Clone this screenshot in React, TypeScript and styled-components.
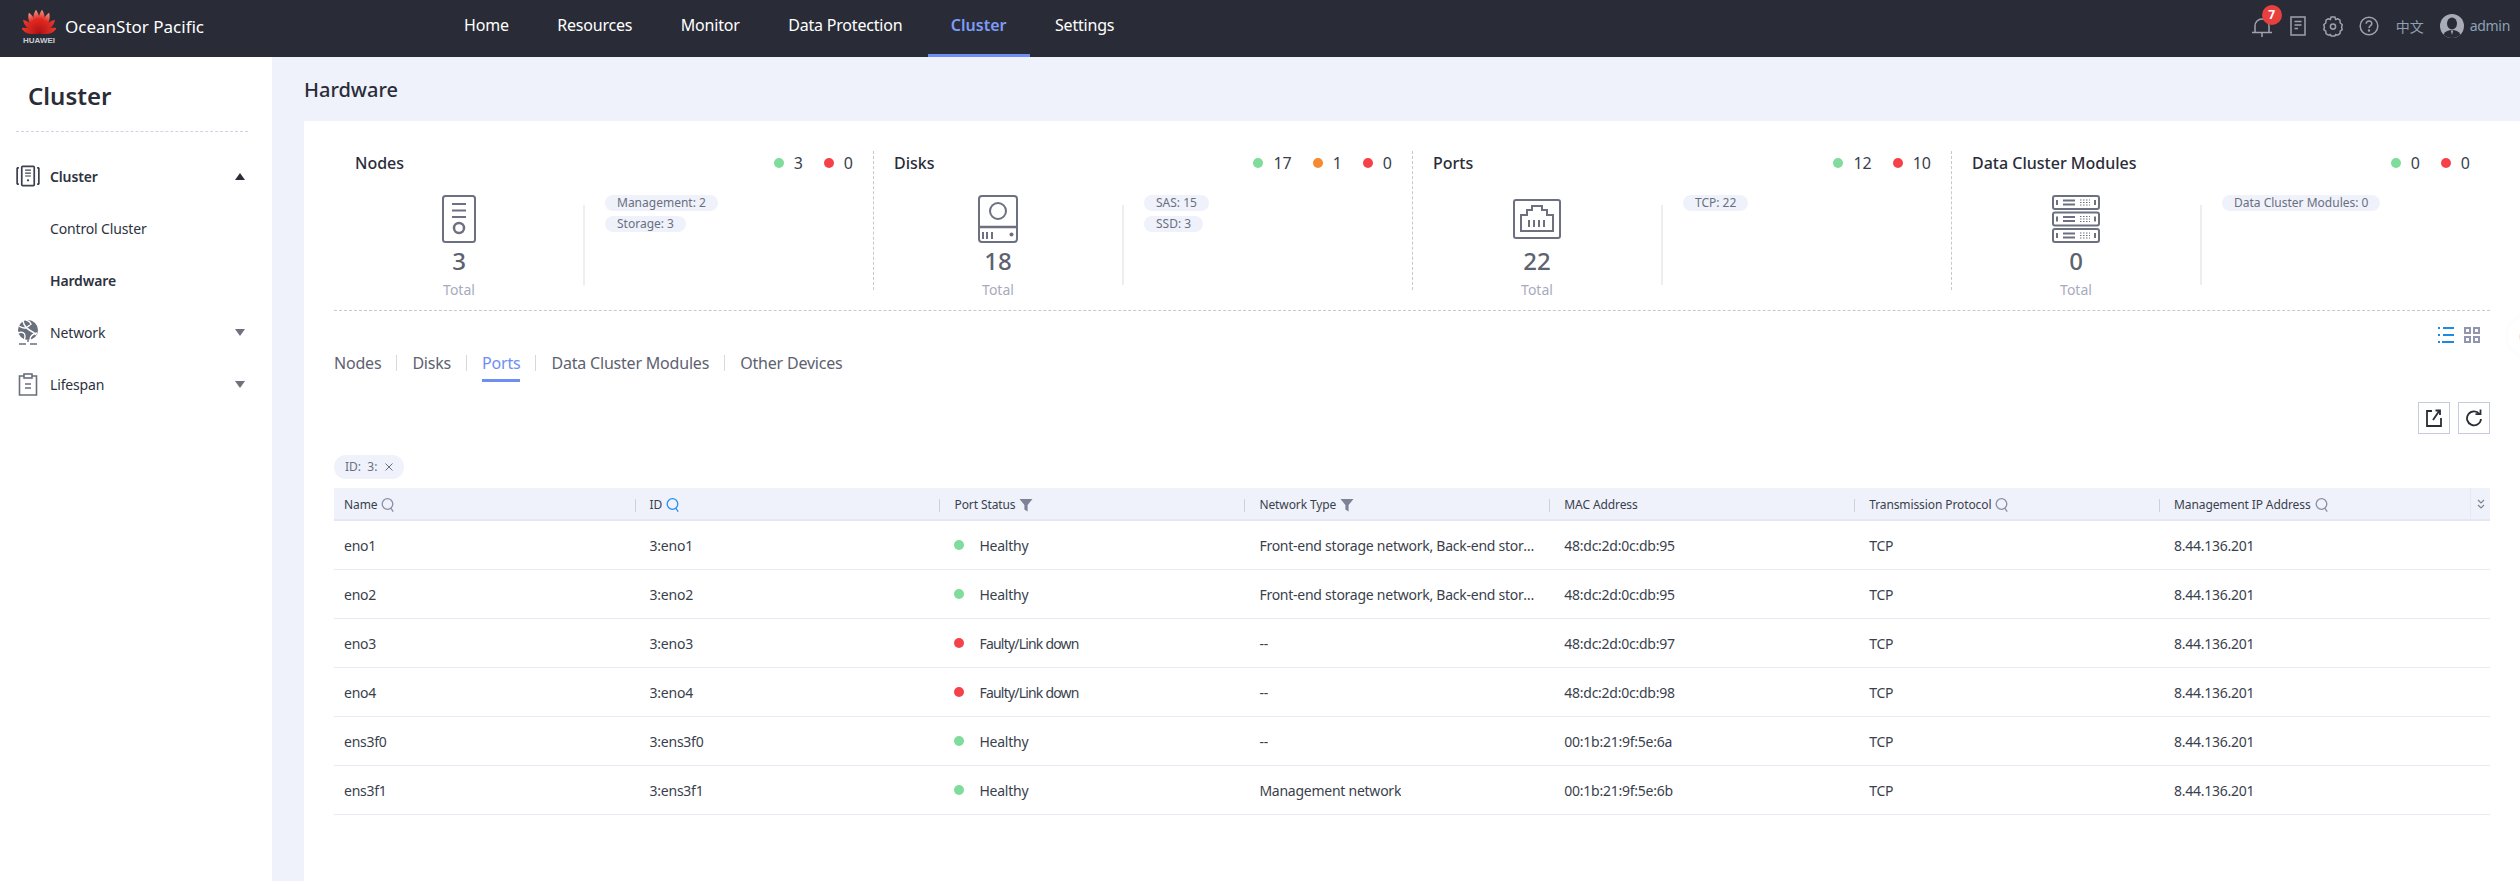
import React from "react";
import styled, { createGlobalStyle } from "styled-components";

const Global = createGlobalStyle`
  html, body { margin: 0; padding: 0; background: #eff2fb; }
  body { font-family: "Noto Sans", "Noto Sans CJK SC", sans-serif; color: #2a2d38; }
  * { box-sizing: border-box; }
`;

const Page = styled.div`
  width: 2520px;
  height: 881px;
  display: flex;
  flex-direction: column;
  overflow: hidden;
  position: relative;
`;

const Header = styled.header`
  height: 57px;
  flex: none;
  background: #292c37;
  display: flex;
  align-items: flex-start;
  padding: 0 0 0 22px;
`;

const Brand = styled.div`
  width: 419px;
  flex: none;
  padding-top: 8px;
  display: flex;
  align-items: flex-start;
  gap: 9px;
  color: #fff;
  font-size: 17px;
`;

const BrandName = styled.span`
  line-height: 24px;
  margin-top: 7px;
`;

const LogoBox = styled.div`
  width: 34px;
  display: flex;
  flex-direction: column;
  align-items: center;
  gap: 3px;
  color: #c9ccd4;
  font-size: 8px;
  line-height: 8px;
  font-weight: 700;
  font-family: "Liberation Sans", sans-serif;
`;

const Nav = styled.nav`
  height: 57px;
  display: flex;
`;

const NavItem = styled.div<{ $active?: boolean }>`
  height: 57px;
  padding: 0 23px;
  margin-right: 2.5px;
  line-height: 51px;
  font-size: 16px;
  letter-spacing: ${(p) => (p.$active ? "0" : "-0.2px")};
  color: ${(p) => (p.$active ? "#7e9cf7" : "#fff")};
  font-weight: ${(p) => (p.$active ? 600 : 400)};
  border-bottom: 3px solid ${(p) => (p.$active ? "#6c8ef5" : "transparent")};
`;

const HeaderRight = styled.div`
  margin-left: auto;
  display: flex;
  align-items: center;
  height: 52px;
  padding-right: 10px;
  color: #9ea2b0;
`;

const IconSlot = styled.div<{ $w: number; $ml?: number }>`
  width: ${(p) => p.$w}px;
  margin-left: ${(p) => p.$ml ?? 0}px;
  display: flex;
  justify-content: center;
  position: relative;
`;

const Badge = styled.span`
  position: absolute;
  top: -10px;
  left: 11px;
  width: 20px;
  height: 20px;
  border-radius: 50%;
  background: #e8403f;
  color: #fff;
  font-size: 12px;
  font-weight: 700;
  line-height: 20px;
  text-align: center;
`;

const Lang = styled.span`
  font-size: 14px;
  color: #8fa0b5;
  margin-left: 17px;
  margin-top: -1px;
`;

const UserName = styled.span`
  font-size: 14px;
  letter-spacing: -0.3px;
  color: #8fa0b5;
  margin-left: 6px;
  margin-top: -1px;
`;

const Body = styled.div`
  flex: 1;
  display: flex;
  min-height: 0;
`;

const Side = styled.aside`
  width: 272px;
  flex: none;
  background: #fff;
  padding: 0 24px 0 16px;
`;

const SideTitle = styled.div`
  height: 75px;
  border-bottom: 1px dashed #cdd2e6;
  padding: 17px 0 0 12px;
  font-size: 24px;
  line-height: 44px;
  font-weight: 600;
  color: #2a2d38;
`;

const Menu = styled.div`
  padding-top: 18px;
`;

const MenuRow = styled.div<{ $strong?: boolean }>`
  height: 52px;
  display: flex;
  align-items: center;
  font-size: 14px;
  letter-spacing: -0.15px;
  font-weight: ${(p) => (p.$strong ? 600 : 400)};
  color: #2d3240;
  position: relative;
`;

const MenuIcon = styled.div`
  width: 34px;
  flex: none;
  display: flex;
  justify-content: center;
  padding-right: 10px;
`;

const SubLabel = styled.span`
  margin-left: 34px;
`;

const Caret = styled.span<{ $up?: boolean }>`
  margin-left: auto;
  margin-right: 3px;
  width: 0;
  height: 0;
  border-left: 5px solid transparent;
  border-right: 5px solid transparent;
  ${(p) =>
    p.$up
      ? "border-bottom: 7px solid #2a2d38;"
      : "border-top: 7px solid #6d7180;"}
`;

const Main = styled.main`
  flex: 1;
  min-width: 0;
  padding: 0 0 0 32px;
  display: flex;
  flex-direction: column;
`;

const PageTitle = styled.div`
  height: 64px;
  font-size: 20px;
  font-weight: 500;
  line-height: 66px;
  color: #2a2d38;
`;

const Card = styled.div`
  flex: 1;
  background: #fff;
  padding: 30px 30px 0;
`;

const Stats = styled.div`
  display: grid;
  grid-template-columns: repeat(4, 539px);
  border-bottom: 1px dashed #c8c8c8;
  padding-bottom: 20px;
  height: 160px;
`;

const Stat = styled.section<{ $first?: boolean }>`
  height: 139px;
  padding: 0 20px 0 20px;
  position: relative;
  border-left: 1px dashed ${(p) => (p.$first ? "transparent" : "#c8c8c8")};
`;

const StatHead = styled.div`
  height: 24px;
  display: flex;
  align-items: center;
  justify-content: space-between;
`;

const StatName = styled.div`
  font-size: 16px;
  font-weight: 500;
  color: #2a2d38;
`;

const Health = styled.div`
  display: flex;
  align-items: center;
  gap: 21px;
  font-size: 16px;
  color: #3a3f4d;
`;

const HealthItem = styled.span`
  display: flex;
  align-items: center;
  gap: 10px;
`;

const Dot = styled.i<{ $c: string }>`
  display: block;
  width: 10px;
  height: 10px;
  border-radius: 50%;
  background: ${(p) => p.$c};
  flex: none;
`;

const StatBody = styled.div`
  display: grid;
  grid-template-columns: 248px 1fr;
  margin-top: 20px;
  margin-left: -20px;
`;

const Total = styled.div`
  width: 248px;
  display: flex;
  flex-direction: column;
  align-items: center;
`;

const TotalIcon = styled.div`
  height: 48px;
  display: flex;
  align-items: center;
  justify-content: center;
  color: #6c7080;
`;

const TotalNum = styled.div`
  font-size: 24px;
  line-height: 36px;
  color: #5d6270;
  font-weight: 500;
`;

const TotalLabel = styled.div`
  font-size: 14px;
  line-height: 20px;
  margin-top: 1px;
  color: #a8abbd;
`;

const TagCol = styled.div`
  padding-left: 22px;
  display: flex;
  flex-direction: column;
  align-items: flex-start;
  gap: 5px;
  position: relative;
  &::before {
    content: "";
    position: absolute;
    left: 0;
    top: 10px;
    width: 2px;
    height: 80px;
    background: #eeeeee;
  }
`;

const Tag = styled.span`
  height: 16px;
  border-radius: 8px;
  background: #eff2fb;
  color: #6a6f7e;
  font-size: 12px;
  line-height: 16px;
  padding: 0 12px;
  white-space: nowrap;
`;

const ViewToggle = styled.div`
  height: 36px;
  display: flex;
  justify-content: flex-end;
  gap: 10px;
  padding: 16px 10px 0 0;
`;

const Tabs = styled.div`
  display: flex;
  align-items: flex-start;
  height: 26px;
  margin-top: 5px;
`;

const Tab = styled.div<{ $active?: boolean }>`
  position: relative;
  font-size: 16px;
  letter-spacing: -0.2px;
  line-height: 22px;
  height: 30px;
  color: ${(p) => (p.$active ? "#6c8ef5" : "#5d6270")};
  &::after {
    content: "";
    position: absolute;
    left: 0;
    right: 0;
    bottom: 0;
    height: 3px;
    background: ${(p) => (p.$active ? "#6c8ef5" : "transparent")};
  }
`;

const TabSep = styled.div`
  width: 1px;
  height: 16px;
  background: #d6d8e0;
  margin: 3px 15px 0;
`;

const Tools = styled.div`
  display: flex;
  justify-content: flex-end;
  gap: 8px;
  margin-top: 24px;
`;

const ToolBtn = styled.div`
  width: 32px;
  height: 32px;
  border: 1px solid #c6cada;
  display: flex;
  align-items: center;
  justify-content: center;
  color: #2a2d38;
`;

const FilterRow = styled.div`
  margin-top: 20px;
  height: 24px;
`;

const FilterTag = styled.span`
  display: inline-flex;
  align-items: center;
  height: 24px;
  padding: 0 11px;
  gap: 8px;
  border-radius: 12px;
  background: #eff2fb;
  font-size: 12px;
  color: #6a6f7e;
  white-space: pre;
`;

const Table = styled.div`
  margin-top: 10px;
`;

const cols = "300.6px repeat(5, 304.9px) 1fr";

const HeadRow = styled.div`
  display: grid;
  grid-template-columns: ${cols};
  height: 33px;
  background: #eff2fb;
  border-bottom: 2px solid #e5e8f3;
  align-items: center;
  position: relative;
`;

const HeadCell = styled.div<{ $first?: boolean }>`
  display: flex;
  align-items: center;
  gap: 4px;
  font-size: 12px;
  letter-spacing: -0.1px;
  color: #3a3f4d;
  height: 22px;
  padding-top: 2px;
  padding-left: ${(p) => (p.$first ? 10 : 15)}px;
  position: relative;
  &::before {
    content: "";
    display: ${(p) => (p.$first ? "none" : "block")};
    position: absolute;
    left: 0;
    top: 6px;
    width: 1px;
    height: 13px;
    background: #ced1dd;
  }
`;

const ExpandCell = styled.div`
  position: absolute;
  right: 0;
  top: 0;
  width: 20px;
  height: 31px;
  border-left: 1px solid #e5e8f3;
  display: flex;
  align-items: center;
  justify-content: center;
  color: #7d8295;
`;

const Row = styled.div`
  display: grid;
  grid-template-columns: ${cols};
  height: 49px;
  border-bottom: 1px solid #e7e9f3;
  align-items: center;
`;

const Cell = styled.div<{ $first?: boolean }>`
  font-size: 14px;
  letter-spacing: -0.25px;
  color: #3a3f4d;
  padding-left: ${(p) => (p.$first ? 10 : 15)}px;
  padding-right: 10px;
  display: flex;
  align-items: center;
  gap: 15px;
  white-space: nowrap;
  overflow: hidden;
`;

const Clip = styled.span`
  overflow: hidden;
  text-overflow: ellipsis;
`;

const StatusText = styled.span<{ $tight?: boolean }>`
  letter-spacing: ${(p) => (p.$tight ? "-0.8px" : "-0.25px")};
`;

const Float = styled.div`
  position: absolute;
  left: 2508px;
  top: 316px;
  width: 40px;
  height: 40px;
  border-radius: 50%;
  background: #fff;
  box-shadow: 0 0 8px rgba(0, 0, 0, 0.03);
  &::after {
    content: "";
    position: absolute;
    left: 11px;
    top: 15px;
    width: 12px;
    height: 12px;
    border-radius: 50%;
    background: #fbe2cd;
  }
`;

const Search = ({ blue }: { blue?: boolean }) => (
  <svg width="14" height="16" viewBox="0 0 14 16" fill="none" stroke={blue ? "#2a8ef0" : "#8a90a5"} strokeWidth="1.3">
    <circle cx="6.5" cy="7" r="5.3" />
    <path d="M9.8 11.2l2.4 3.4" />
  </svg>
);

const Filter = () => (
  <svg width="14" height="14" viewBox="0 0 14 14" fill="#7d8295">
    <path d="M0.5 1h13L8.6 7v6.5L5.4 11.5V7z" />
  </svg>
);

const PETAL = "M0 0C-3.6-6-4.6-13-3-18C-2.2-20.500-1-22.500 0.4-24C1.800-21 2.800-17.500 2.900-13C3-8 1.600-3.500 0 0z";
const petals: [number, number][] = [
  [-8, 1], [8, 1], [-27, 0.96], [27, 0.96], [-50, 0.88], [50, 0.88], [-74, 0.78], [74, 0.78],
];

const Logo = () => (
  <svg width="34" height="26" viewBox="0 0 34 26">
    <defs>
      <linearGradient id="hw" x1="0" y1="0" x2="0" y2="1">
        <stop offset="0" stopColor="#f6a08c" />
        <stop offset="0.4" stopColor="#e2271f" />
        <stop offset="1" stopColor="#b01014" />
      </linearGradient>
      <linearGradient id="hw2" x1="0" y1="0" x2="0" y2="1">
        <stop offset="0" stopColor="#ee3a2c" />
        <stop offset="1" stopColor="#b01014" />
      </linearGradient>
    </defs>
    {petals.map(([a, s]) => (
      <path
        key={a}
        d={PETAL}
        fill={Math.abs(a) < 30 ? "url(#hw)" : "url(#hw2)"}
        transform={`translate(17 25.5) rotate(${a}) scale(${a < 0 ? s : -s} ${s})`}
      />
    ))}
  </svg>
);

const Bell = () => (
  <svg width="22" height="22" viewBox="0 0 22 22" fill="none" stroke="#9ea2b0" strokeWidth="1.5">
    <path d="M1 17.5h20M4 17.5V11a7 7 0 0 1 14 0v6.5M11 18v4" />
  </svg>
);

const Doc = () => (
  <svg width="16" height="20" viewBox="0 0 16 20" fill="none" stroke="#9ea2b0" strokeWidth="1.5">
    <rect x="1" y="1" width="14" height="18" />
    <path d="M4.5 5.500h7M4.500 9h7M4.500 12.500h3.500" />
  </svg>
);

const Gear = () => (
  <svg width="20" height="21" viewBox="0 0 20 21" fill="none" stroke="#9ea2b0" strokeWidth="1.5">
    <path d="M8 1h4l.6 2.600 2-.9 2.400 1.500.2 2.800 2 1.500-.6 2.800.6 2.400-2 1.500-.2 2.400-2.400 1.500-2-.7L12 20H8l-.6-1.600-2 .7L3 17.600l-.2-2.400-2-1.500.6-2.400-.6-2.800 2-1.500.2-2.800 2.400-1.500 2 .9z" strokeLinejoin="round" />
    <circle cx="10" cy="10.500" r="2.600" />
  </svg>
);

const Help = () => (
  <svg width="20" height="20" viewBox="0 0 20 20" fill="none" stroke="#9ea2b0" strokeWidth="1.5">
    <circle cx="10" cy="10" r="8.800" />
    <path d="M7.200 7.800c0-4 6-3.600 5.600 0-.2 1.800-2.800 2-2.800 4.200" />
    <circle cx="10" cy="14.600" r=".5" fill="#9ea2b0" />
  </svg>
);

const Avatar = () => (
  <svg width="24" height="24" viewBox="0 0 24 24">
    <circle cx="12" cy="12" r="12" fill="#a8acb8" />
    <ellipse cx="12" cy="9.500" rx="5" ry="6" fill="#292c37" />
    <path d="M3.500 20.500c2-3.500 5-4.500 8.500-4.500s6.500 1 8.500 4.500c-2.500 2.300-5 3.500-8.500 3.500s-6-1.200-8.500-3.500z" fill="#292c37" />
    <path d="M10.800 16.500h2.400L12 21z" fill="#a8acb8" />
  </svg>
);

const ClusterIcon = () => (
  <svg width="25" height="22" viewBox="0 0 25 22" fill="none" stroke="#3d4150" strokeWidth="1.800">
    <rect x="6" y="1" width="13" height="20" rx="1" />
    <path d="M1.200 2.500v17M23.800 2.500v17M1 2.500h2M1 19.500h2M22 2.500h2M22 19.500h2" />
    <path d="M9.500 5h6M9.500 8h6M9.500 11h6" strokeWidth="1.300" />
    <circle cx="12.500" cy="15.500" r="1.200" fill="#3d4150" stroke="none" />
  </svg>
);

const GlobeIcon = () => (
  <svg width="22" height="25" viewBox="0 0 22 25">
    <circle cx="11" cy="10" r="10" fill="#6a6f7e" />
    <g stroke="#fff" strokeWidth="1.400" fill="none">
      <path d="M2 6c4 3 8 2 11-1M6 1c1 5 4 8 8 10s5 4 5 4M1 13c4-2 7 0 7 3s-1 3-1 3M13 20c0-4 2-6 7-7M9 0c3 1 5 2 5 5" />
    </g>
    <path d="M2 24h7M13 24h7M11 20v2" stroke="#6a6f7e" strokeWidth="1.400" />
  </svg>
);

const ClipIcon = () => (
  <svg width="20" height="23" viewBox="0 0 20 23" fill="none" stroke="#6a6f7e" strokeWidth="1.600">
    <path d="M6 3H1.500v19h17V3H14" />
    <rect x="6" y="1" width="8" height="4" />
    <path d="M7 11h6M7 15h6" />
  </svg>
);

const NodeIcon = () => (
  <svg width="36" height="48" viewBox="0 0 36 48" fill="none" stroke="#6c7080" strokeWidth="2">
    <rect x="2" y="1" width="32" height="46" rx="2.500" />
    <path d="M11 9h14M11 15.500h14M11 22h14" />
    <circle cx="18" cy="33" r="5" strokeWidth="2.500" />
  </svg>
);

const DiskIcon = () => (
  <svg width="40" height="48" viewBox="0 0 40 48" fill="none" stroke="#6c7080" strokeWidth="2">
    <rect x="1" y="1" width="38" height="46" rx="3" />
    <circle cx="20" cy="16" r="8" />
    <path d="M1 32h38" strokeWidth="2.400" />
    <path d="M5 37v7M9 37v7M14 37v7" />
    <circle cx="33.500" cy="39.500" r="2" fill="#6c7080" stroke="none" />
  </svg>
);

const PortIcon = () => (
  <svg width="48" height="40" viewBox="0 0 48 40" fill="none" stroke="#6c7080" strokeWidth="2">
    <rect x="1" y="1" width="46" height="38" rx="2" />
    <path d="M8 32V16h6V11h5V7h10v4h5v5h6v16z" />
    <path d="M16 21v7M21 21v7M26 21v7M31 21v7" />
  </svg>
);

const ServerIcon = () => (
  <svg width="48" height="48" viewBox="0 0 48 48" fill="none" stroke="#6c7080" strokeWidth="2">
    {[0, 16.5, 33].map((y) => (
      <g key={y} transform={`translate(0 ${y})`}>
        <rect x="1" y="1" width="46" height="13" rx="2" />
        <path d="M5 5v5M43 5v5" />
        <path d="M11 5.500h12M11 9.500h12" />
        <path d="M28 5h10M28 7.500h10M28 10h10" strokeWidth="1.200" strokeDasharray="1.500 1.500" />
      </g>
    ))}
  </svg>
);

const ListIcon = () => (
  <svg width="16" height="16" viewBox="0 0 16 16" fill="#1f8be0">
    <path d="M0 0h2v2H0zM5 0h11v2H5zM0 7h2v2H0zM5 7h11v2H5zM0 14h2v2H0zM4 14h12v2H4z" />
  </svg>
);

const GridIcon = () => (
  <svg width="16" height="16" viewBox="0 0 16 16" fill="none" stroke="#9195ad" strokeWidth="2">
    <rect x="1" y="1" width="5" height="5" />
    <rect x="10" y="1" width="5" height="5" />
    <rect x="1" y="10" width="5" height="5" />
    <rect x="10" y="10" width="5" height="5" />
  </svg>
);

const ExportIcon = () => (
  <svg width="16" height="18" viewBox="0 0 16 18" fill="none" stroke="#2a2d38" strokeWidth="1.800">
    <path d="M6 2H1v15h14V9" />
    <path d="M7 11L13.500 1.500M9.500 1.500h4.500v4.500" />
  </svg>
);

const RefreshIcon = () => (
  <svg width="16" height="18" viewBox="0 0 16 18" fill="none" stroke="#2a2d38" strokeWidth="1.800">
    <path d="M13.500 5A7 7 0 1 0 15 10" />
    <path d="M9.500 5.200h5V0.500" />
  </svg>
);

const Chevrons = () => (
  <svg width="8" height="10" viewBox="0 0 8 10" fill="none" stroke="currentColor" strokeWidth="1.200">
    <path d="M1 1l3 3 3-3M1 6l3 3 3-3" />
  </svg>
);

const Cross = () => (
  <svg width="8" height="8" viewBox="0 0 8 8" stroke="#6a6f7e" strokeWidth="1">
    <path d="M0.500 0.500l7 7M7.500 0.500l-7 7" />
  </svg>
);

const GREEN = "#7fdc9a";
const RED = "#f5424a";
const ORANGE = "#f58a2e";

const stats = [
  { name: "Nodes", health: [[GREEN, "3"], [RED, "0"]], icon: <NodeIcon />, total: 3, tags: ["Management: 2", "Storage: 3"] },
  { name: "Disks", health: [[GREEN, "17"], [ORANGE, "1"], [RED, "0"]], icon: <DiskIcon />, total: 18, tags: ["SAS: 15", "SSD: 3"] },
  { name: "Ports", health: [[GREEN, "12"], [RED, "10"]], icon: <PortIcon />, total: 22, tags: ["TCP: 22"] },
  { name: "Data Cluster Modules", health: [[GREEN, "0"], [RED, "0"]], icon: <ServerIcon />, total: 0, tags: ["Data Cluster Modules: 0"] },
];

const rows = [
  ["eno1", "Healthy", "Front-end storage network, Back-end storage network", "48:dc:2d:0c:db:95"],
  ["eno2", "Healthy", "Front-end storage network, Back-end storage network", "48:dc:2d:0c:db:95"],
  ["eno3", "Faulty/Link down", "--", "48:dc:2d:0c:db:97"],
  ["eno4", "Faulty/Link down", "--", "48:dc:2d:0c:db:98"],
  ["ens3f0", "Healthy", "--", "00:1b:21:9f:5e:6a"],
  ["ens3f1", "Healthy", "Management network", "00:1b:21:9f:5e:6b"],
];

const navItems = ["Home", "Resources", "Monitor", "Data Protection", "Cluster", "Settings"];
const tabs = ["Nodes", "Disks", "Ports", "Data Cluster Modules", "Other Devices"];

export default function App() {
  return (
    <Page>
      <Global />
      <Header>
        <Brand>
          <LogoBox>
            <Logo />
            HUAWEI
          </LogoBox>
          <BrandName>OceanStor Pacific</BrandName>
        </Brand>
        <Nav>
          {navItems.map((n) => (
            <NavItem key={n} $active={n === "Cluster"}>
              {n}
            </NavItem>
          ))}
        </Nav>
        <HeaderRight>
          <IconSlot $w={22}>
            <Bell />
            <Badge>7</Badge>
          </IconSlot>
          <IconSlot $w={16} $ml={17}><Doc /></IconSlot>
          <IconSlot $w={20} $ml={17}><Gear /></IconSlot>
          <IconSlot $w={20} $ml={16}><Help /></IconSlot>
          <Lang>中文</Lang>
          <IconSlot $w={24} $ml={16}><Avatar /></IconSlot>
          <UserName>admin</UserName>
        </HeaderRight>
      </Header>
      <Body>
        <Side>
          <SideTitle>Cluster</SideTitle>
          <Menu>
            <MenuRow $strong>
              <MenuIcon><ClusterIcon /></MenuIcon>
              Cluster
              <Caret $up />
            </MenuRow>
            <MenuRow><SubLabel>Control Cluster</SubLabel></MenuRow>
            <MenuRow $strong><SubLabel>Hardware</SubLabel></MenuRow>
            <MenuRow>
              <MenuIcon><GlobeIcon /></MenuIcon>
              Network
              <Caret />
            </MenuRow>
            <MenuRow>
              <MenuIcon><ClipIcon /></MenuIcon>
              Lifespan
              <Caret />
            </MenuRow>
          </Menu>
        </Side>
        <Main>
          <PageTitle>Hardware</PageTitle>
          <Card>
            <Stats>
              {stats.map((s, i) => (
                <Stat key={s.name} $first={i === 0}>
                  <StatHead>
                    <StatName>{s.name}</StatName>
                    <Health>
                      {s.health.map(([c, v], j) => (
                        <HealthItem key={j}>
                          <Dot $c={c} />
                          {v}
                        </HealthItem>
                      ))}
                    </Health>
                  </StatHead>
                  <StatBody>
                    <Total>
                      <TotalIcon>{s.icon}</TotalIcon>
                      <TotalNum>{s.total}</TotalNum>
                      <TotalLabel>Total</TotalLabel>
                    </Total>
                    <TagCol>
                      {s.tags.map((t) => (
                        <Tag key={t}>{t}</Tag>
                      ))}
                    </TagCol>
                  </StatBody>
                </Stat>
              ))}
            </Stats>
            <ViewToggle>
              <ListIcon />
              <GridIcon />
            </ViewToggle>
            <Tabs>
              {tabs.map((t, i) => (
                <React.Fragment key={t}>
                  {i > 0 && <TabSep />}
                  <Tab $active={t === "Ports"}>{t}</Tab>
                </React.Fragment>
              ))}
            </Tabs>
            <Tools>
              <ToolBtn><ExportIcon /></ToolBtn>
              <ToolBtn><RefreshIcon /></ToolBtn>
            </Tools>
            <FilterRow>
              <FilterTag>
                {"ID:  3:"}
                <Cross />
              </FilterTag>
            </FilterRow>
            <Table>
              <HeadRow>
                <HeadCell $first>Name <Search /></HeadCell>
                <HeadCell>ID <Search blue /></HeadCell>
                <HeadCell>Port Status <Filter /></HeadCell>
                <HeadCell>Network Type <Filter /></HeadCell>
                <HeadCell>MAC Address</HeadCell>
                <HeadCell>Transmission Protocol <Search /></HeadCell>
                <HeadCell>Management IP Address <Search /></HeadCell>
                <ExpandCell><Chevrons /></ExpandCell>
              </HeadRow>
              {rows.map((r) => (
                <Row key={r[0]}>
                  <Cell $first>{r[0]}</Cell>
                  <Cell>3:{r[0]}</Cell>
                  <Cell>
                    <Dot $c={r[1] === "Healthy" ? GREEN : RED} />
                    <StatusText $tight={r[1] !== "Healthy"}>{r[1]}</StatusText>
                  </Cell>
                  <Cell><Clip>{r[2]}</Clip></Cell>
                  <Cell>{r[3]}</Cell>
                  <Cell>TCP</Cell>
                  <Cell>8.44.136.201</Cell>
                </Row>
              ))}
            </Table>
          </Card>
        </Main>
      </Body>
      <Float />
    </Page>
  );
}
